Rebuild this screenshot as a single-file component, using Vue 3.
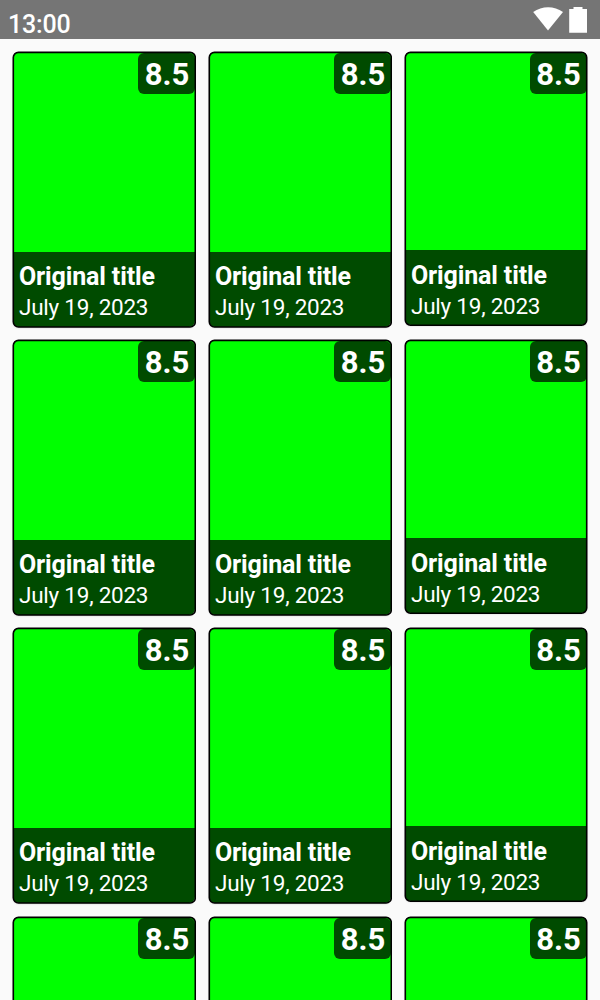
<script setup>
const details = { title: 'Original title', date: 'July 19, 2023' }
const cards = Array.from({ length: 12 }, (_, id) => {
  const last = id % 3 === 2
  return {
    id,
    rating: '8.5',
    outlineWidth: last ? 181.4 : 182,
    outlineHeight: last ? 272.8 : 274.6,
    details: id < 9 ? details : null,
  }
})
</script>

<template>
  <div class="screen">
    <header class="status">
      <span class="time">13:00</span>
      <svg class="icons" width="56" height="28" viewBox="0 0 56 28">
        <path fill="#fff" d="M1.2 5.1C10-1.3 22.2-1.3 31 5.1L16 23.6Z" />
        <path fill="#fff" d="M37.2 1.9h4.3V0h9v1.9H55v23.9H37.2z" />
      </svg>
    </header>
    <main class="grid">
      <article v-for="card in cards" :key="card.id" class="card">
        <div class="content">
          <div class="poster"></div>
          <div v-if="card.details" class="info">
            <div class="title">{{ card.details.title }}</div>
            <div class="date">{{ card.details.date }}</div>
          </div>
          <span class="rating">{{ card.rating }}</span>
        </div>
        <svg class="outline">
          <rect
            x="1.3"
            y="1.4"
            :width="card.outlineWidth"
            :height="card.outlineHeight"
            rx="5.2"
            fill="none"
            stroke="#000"
            stroke-width="1.6"
          />
        </svg>
      </article>
    </main>
  </div>
</template>

<style>
body {
  background: #fafafa;
  overflow: hidden;
}
</style>

<style scoped>
.screen {
  width: 600px;
  height: 1000px;
  overflow: hidden;
  background: #fafafa;
  font-family: Roboto, sans-serif;
  color: #fff;
}
.status {
  box-sizing: border-box;
  height: 39px;
  padding: 7px 12px 0 8px;
  display: flex;
  justify-content: space-between;
  background: #757575;
}
.time {
  font-size: 25px;
  font-weight: 500;
  line-height: 36px;
  letter-spacing: -0.15px;
}
.grid {
  display: grid;
  grid-template-columns: repeat(3, 184px);
  grid-auto-rows: 277px;
  column-gap: 12px;
  row-gap: 11.2px;
  align-items: start;
  padding: 12px;
}
.card {
  box-sizing: border-box;
  position: relative;
  height: 277px;
  padding: 1px;
}
.card:nth-child(3n) {
  height: 275px;
}
.content {
  position: relative;
  height: 100%;
  display: flex;
  flex-direction: column;
  border-radius: 6px;
  overflow: hidden;
  background: #004b00;
  box-shadow: 0 1px 2px rgba(0, 0, 0, 0.2);
}
.outline {
  position: absolute;
  inset: 0;
  width: 100%;
  height: 100%;
}
.poster {
  flex: 1;
  background: #0f0;
}
.info {
  box-sizing: border-box;
  height: 75px;
  padding: 9px 6px 0;
  white-space: nowrap;
}
.title {
  font-size: 25px;
  font-weight: 700;
  line-height: 32px;
  letter-spacing: -0.14px;
}
.date {
  font-size: 22.5px;
  line-height: 28px;
  letter-spacing: -0.24px;
}
.card:nth-child(3n) .title {
  line-height: 33px;
}
.rating {
  position: absolute;
  top: 1px;
  right: 0;
  box-sizing: border-box;
  width: 57px;
  height: 41px;
  padding-left: 1px;
  border-radius: 6px;
  background: #004b00;
  font-size: 31px;
  font-weight: 700;
  line-height: 43px;
  text-align: center;
}
.card:nth-child(3n) .rating {
  padding-left: 0;
}
</style>
